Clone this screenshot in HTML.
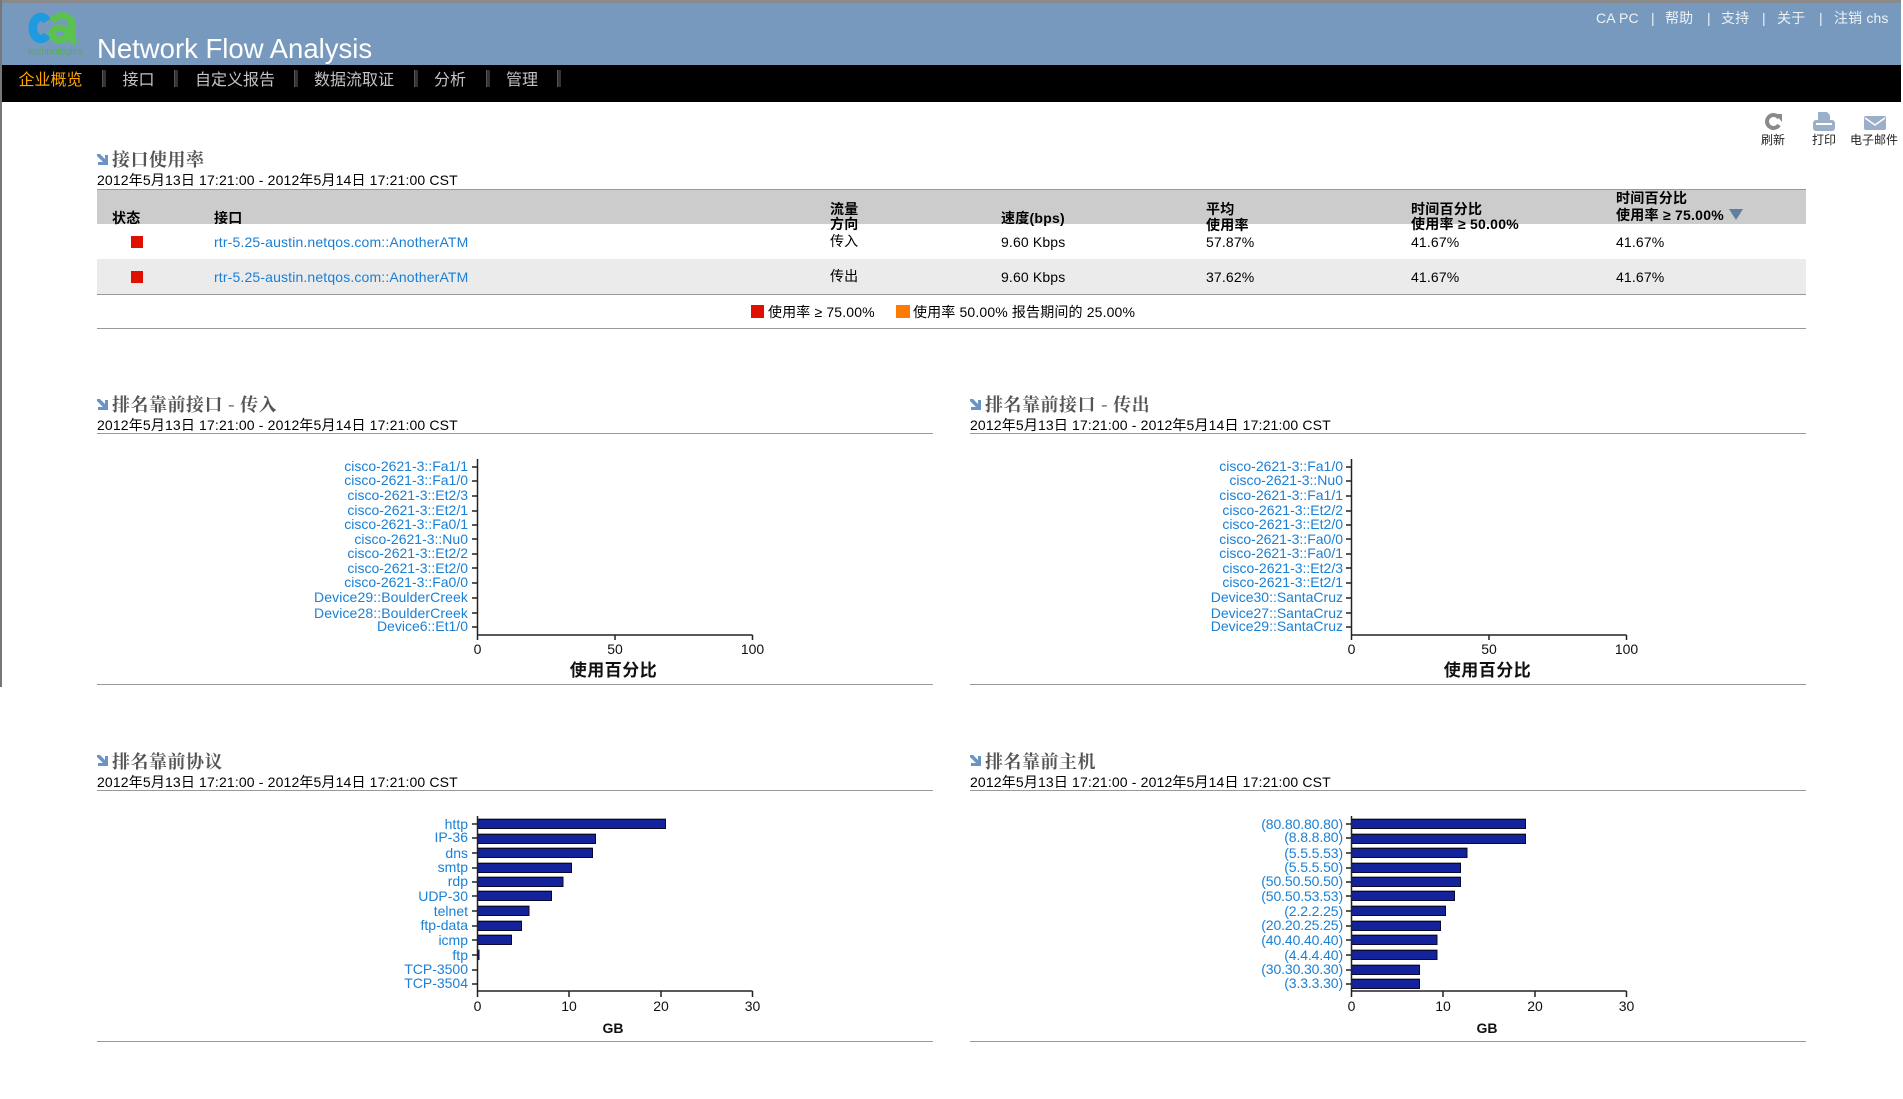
<!DOCTYPE html>
<html lang="zh"><head><meta charset="utf-8"><title>Network Flow Analysis</title>
<style>
html,body{margin:0;padding:0;background:#fff;width:1903px;height:1099px;overflow:hidden}
body{position:relative;font-family:"Liberation Sans","Noto Sans CJK SC",sans-serif;font-size:14px;color:#000}
.a{position:absolute;white-space:nowrap;line-height:16px;letter-spacing:.15px}
.b{position:absolute}
.n{font-size:16px;color:#c4c4c4;top:72px;line-height:18px;letter-spacing:0}
.s{position:absolute;top:70px;width:4px;height:17px;background:#333;border-left:1px solid #555;box-sizing:border-box}
.t{font-size:14px;color:#eef2f7;top:10px}
.h{font-family:"Noto Serif CJK SC",serif;font-size:18px;font-weight:700;color:#555;line-height:20px;letter-spacing:.5px}
.th{font-weight:700;letter-spacing:.25px}
.l{color:#1a7fd4}
.hr{position:absolute;height:1px;background:#999}
text{font-family:"Liberation Sans","Noto Sans CJK SC",sans-serif;font-size:14px}
.yl text{fill:#1a80d5;text-anchor:end}
.xl text{fill:#111;text-anchor:middle}
.bars{filter:drop-shadow(0 -1px 0 #aaa)}
</style></head><body>
<div class="b" style="left:0;top:0;width:1901px;height:3px;background:#8a8a8a"></div>
<div class="b" style="left:0;top:0;width:2px;height:687px;background:#777"></div>
<div class="b" style="left:2px;top:3px;width:1899px;height:62px;background:#7699bd"></div>
<div class="b" style="left:2px;top:65px;width:1899px;height:37px;background:#000"></div>
<svg class="b" style="left:20px;top:8px" width="70" height="50" viewBox="20 8 70 50">
<path d="M47 21 A8 11 0 1 0 47 35" fill="none" stroke="#1e9be0" stroke-width="8.500"/>
<ellipse cx="60" cy="34" rx="8" ry="6" fill="none" stroke="#5cc24f" stroke-width="7"/>
<path d="M52 21 Q60 13 67 17 Q72 19 72 26 L72 39 Q72 42 76 41" fill="none" stroke="#5cc24f" stroke-width="7"/>
<circle cx="79" cy="41" r="1" fill="#5cc24f"/>
<text x="28" y="54.500" style="font-size:9.800px;fill:#4fb34a">technologies</text>
</svg>
<div class="a" style="left:97px;top:33px;font-size:27.500px;line-height:32px;color:#fff;letter-spacing:0">Network Flow Analysis</div>
<div class="a n" style="left:18.500px;color:#ffa500">企业概览</div><div class="s" style="left:102px"></div>
<div class="a n" style="left:122.500px">接口</div><div class="s" style="left:174px"></div>
<div class="a n" style="left:195px">自定义报告</div><div class="s" style="left:294px"></div>
<div class="a n" style="left:314px">数据流取证</div><div class="s" style="left:414px"></div>
<div class="a n" style="left:434px">分析</div><div class="s" style="left:486px"></div>
<div class="a n" style="left:506px">管理</div><div class="s" style="left:557px"></div>
<div class="a t" style="left:1596px">CA PC</div><div class="a t" style="left:1651px">|</div>
<div class="a t" style="left:1665px">帮助</div><div class="a t" style="left:1707px">|</div>
<div class="a t" style="left:1721px">支持</div><div class="a t" style="left:1762px">|</div>
<div class="a t" style="left:1777px">关于</div><div class="a t" style="left:1819px">|</div>
<div class="a t" style="left:1834px">注销 chs</div>
<svg class="b" style="left:1760px;top:110px" width="140" height="24" viewBox="1760 110 140 24">
<path d="M1779 118 A6.500 6.500 0 1 0 1779 125" fill="none" stroke="#8a8a8a" stroke-width="4"/>
<path d="M1775 114 L1782 114 L1782 122 Z" fill="#8a8a8a"/>
<path d="M1818 112 L1827 112 L1830 115 L1830 123 L1818 123 Z" fill="#9bb0c8"/>
<rect x="1813" y="120" width="22" height="11" rx="3" fill="#9bb0c8"/><rect x="1816" y="123" width="16" height="2" fill="#fff"/>
<path d="M1866 116 L1884 116 Q1886 116 1886 118 L1886 128 Q1886 130 1884 130 L1866 130 Q1864 130 1864 128 L1864 118 Q1864 116 1866 116 Z" fill="#9bb0c8"/>
<path d="M1865 118 L1875 125 L1885 118" fill="none" stroke="#fff" stroke-width="1.500"/>
</svg>
<div class="a" style="left:1761px;top:132px;font-size:12px;color:#222;letter-spacing:0">刷新</div>
<div class="a" style="left:1812px;top:132px;font-size:12px;color:#222;letter-spacing:0">打印</div>
<div class="a" style="left:1850px;top:132px;font-size:12px;color:#222;letter-spacing:0">电子邮件</div>

<svg class="b" style="left:97px;top:154px" width="11" height="11" viewBox="0 0 11 11"><path d="M0 0 L3 0 L8 5 L8 1 L11 1 L11 11 L1 11 L1 8 L6 8 L0 2 Z" fill="#6a94c4"/></svg>
<div class="a h" style="left:112px;top:149px">接口使用率</div>
<div class="a" style="left:97px;top:172px">2012年5月13日 17:21:00 - 2012年5月14日 17:21:00 CST</div>

<div class="hr" style="left:97px;top:189px;width:1709px"></div>
<div class="b" style="left:97px;top:190px;width:1709px;height:34px;background:#ccc"></div>
<div class="b" style="left:97px;top:259px;width:1709px;height:35px;background:#ebebeb"></div>
<div class="hr" style="left:97px;top:294px;width:1709px"></div>
<div class="hr" style="left:97px;top:328px;width:1709px"></div>
<div class="a th" style="left:112px;top:210px">状态</div>
<div class="a th" style="left:214px;top:210px">接口</div>
<div class="a th" style="left:830px;top:201.500px;line-height:15.500px">流量<br>方向</div>
<div class="a th" style="left:1001px;top:210px">速度(bps)</div>
<div class="a th" style="left:1206px;top:201px">平均<br>使用率</div>
<div class="a th" style="left:1411px;top:201.500px;line-height:15.500px">时间百分比<br>使用率 ≥ 50.00%</div>
<div class="a th" style="left:1616px;top:190px;line-height:17px">时间百分比<br>使用率 ≥ 75.00%</div>
<svg class="b" style="left:1729px;top:209px" width="14" height="11"><path d="M0 0 L14 0 L7 11 Z" fill="#5f7f9f"/></svg>
<div class="b" style="left:131px;top:236px;width:12px;height:12px;background:#e01000"></div>
<div class="b" style="left:131px;top:271px;width:12px;height:12px;background:#e01000"></div>
<div class="a l" style="left:214px;top:234px">rtr-5.25-austin.netqos.com::AnotherATM</div>
<div class="a l" style="left:214px;top:269px">rtr-5.25-austin.netqos.com::AnotherATM</div>
<div class="a" style="left:830px;top:233px">传入</div><div class="a" style="left:830px;top:268px">传出</div>
<div class="a" style="left:1001px;top:234px">9.60 Kbps</div><div class="a" style="left:1001px;top:269px">9.60 Kbps</div>
<div class="a" style="left:1206px;top:234px">57.87%</div><div class="a" style="left:1206px;top:269px">37.62%</div>
<div class="a" style="left:1411px;top:234px">41.67%</div><div class="a" style="left:1411px;top:269px">41.67%</div>
<div class="a" style="left:1616px;top:234px">41.67%</div><div class="a" style="left:1616px;top:269px">41.67%</div>
<div class="b" style="left:751px;top:305px;width:13px;height:13px;background:#e01000"></div>
<div class="a" style="left:768px;top:304px">使用率 ≥ 75.00%</div>
<div class="b" style="left:896px;top:305px;width:14px;height:13px;background:#ff7a00"></div>
<div class="a" style="left:913px;top:304px">使用率 50.00% 报告期间的 25.00%</div>

<svg class="b" style="left:97px;top:399px" width="11" height="11" viewBox="0 0 11 11"><path d="M0 0 L3 0 L8 5 L8 1 L11 1 L11 11 L1 11 L1 8 L6 8 L0 2 Z" fill="#6a94c4"/></svg>
<div class="a h" style="left:112px;top:394px">排名靠前接口 - 传入</div>
<div class="a" style="left:97px;top:417px">2012年5月13日 17:21:00 - 2012年5月14日 17:21:00 CST</div>
<div class="hr" style="left:97px;top:433px;width:836px"></div>
<svg class="b" style="left:970px;top:399px" width="11" height="11" viewBox="0 0 11 11"><path d="M0 0 L3 0 L8 5 L8 1 L11 1 L11 11 L1 11 L1 8 L6 8 L0 2 Z" fill="#6a94c4"/></svg>
<div class="a h" style="left:985px;top:394px">排名靠前接口 - 传出</div>
<div class="a" style="left:970px;top:417px">2012年5月13日 17:21:00 - 2012年5月14日 17:21:00 CST</div>
<div class="hr" style="left:970px;top:433px;width:836px"></div>
<div class="hr" style="left:97px;top:684px;width:836px"></div>
<div class="hr" style="left:970px;top:684px;width:836px"></div>

<svg class="b" style="left:97px;top:755px" width="11" height="11" viewBox="0 0 11 11"><path d="M0 0 L3 0 L8 5 L8 1 L11 1 L11 11 L1 11 L1 8 L6 8 L0 2 Z" fill="#6a94c4"/></svg>
<div class="a h" style="left:112px;top:751px">排名靠前协议</div>
<div class="a" style="left:97px;top:774px">2012年5月13日 17:21:00 - 2012年5月14日 17:21:00 CST</div>
<div class="hr" style="left:97px;top:790px;width:836px"></div>
<svg class="b" style="left:970px;top:755px" width="11" height="11" viewBox="0 0 11 11"><path d="M0 0 L3 0 L8 5 L8 1 L11 1 L11 11 L1 11 L1 8 L6 8 L0 2 Z" fill="#6a94c4"/></svg>
<div class="a h" style="left:985px;top:751px">排名靠前主机</div>
<div class="a" style="left:970px;top:774px">2012年5月13日 17:21:00 - 2012年5月14日 17:21:00 CST</div>
<div class="hr" style="left:970px;top:790px;width:836px"></div>
<div class="hr" style="left:97px;top:1041px;width:836px"></div>
<div class="hr" style="left:970px;top:1041px;width:836px"></div>

<svg class="b" style="left:0;top:0" width="1903" height="1099" viewBox="0 0 1903 1099">
<g class="bars" fill="#14239b" stroke="#0a0a30" stroke-width="1">
<rect x="477.500" y="819.500" width="188" height="9"/><rect x="477.500" y="834.500" width="118" height="9"/><rect x="477.500" y="848.500" width="115" height="9"/><rect x="477.500" y="863.500" width="94" height="9"/><rect x="477.500" y="877.500" width="85.500" height="9"/><rect x="477.500" y="891.500" width="74" height="9"/><rect x="477.500" y="906.500" width="51.500" height="9"/><rect x="477.500" y="921.500" width="44" height="9"/><rect x="477.500" y="935.500" width="34" height="9"/><rect x="477.500" y="950.500" width="1.500" height="9"/>
<rect x="1351.500" y="819.500" width="174" height="9"/><rect x="1351.500" y="834.500" width="174" height="9"/><rect x="1351.500" y="848.500" width="115.500" height="9"/><rect x="1351.500" y="863.500" width="109" height="9"/><rect x="1351.500" y="877.500" width="109" height="9"/><rect x="1351.500" y="891.500" width="103" height="9"/><rect x="1351.500" y="906.500" width="94" height="9"/><rect x="1351.500" y="921.500" width="89" height="9"/><rect x="1351.500" y="935.500" width="85.500" height="9"/><rect x="1351.500" y="950.500" width="85.500" height="9"/><rect x="1351.500" y="965.500" width="68" height="9"/><rect x="1351.500" y="979.500" width="68" height="9"/>
</g>
<g fill="none" stroke="#222" stroke-width="1.500">
<path d="M477.500 459V635H752.500M477.500 635v5M615 635v5M752.500 635v5M472 467h5M472 481h5M472 496h5M472 511h5M472 525h5M472 539h5M472 554h5M472 568h5M472 583h5M472 598h5M472 613h5M472 627h5"/>
<path d="M1351.500 459V635H1626.500M1351.500 635v5M1489 635v5M1626.500 635v5M1346 467h5M1346 481h5M1346 496h5M1346 511h5M1346 525h5M1346 539h5M1346 554h5M1346 568h5M1346 583h5M1346 598h5M1346 613h5M1346 627h5"/>
<path d="M477.500 816V991H752.500M477.500 991v6M569 991v6M661 991v6M752.500 991v6M472 824h5M472 838h5M472 853h5M472 868h5M472 882h5M472 896h5M472 911h5M472 926h5M472 940h5M472 955h5M472 970h5M472 984h5"/>
<path d="M1351.500 816V991H1626.500M1351.500 991v6M1443 991v6M1535 991v6M1626.500 991v6M1346 824h5M1346 838h5M1346 853h5M1346 868h5M1346 882h5M1346 896h5M1346 911h5M1346 926h5M1346 940h5M1346 955h5M1346 970h5M1346 984h5"/>
</g>
<g class="yl">
<text x="468" y="471">cisco-2621-3::Fa1/1</text><text x="468" y="485">cisco-2621-3::Fa1/0</text><text x="468" y="500">cisco-2621-3::Et2/3</text><text x="468" y="515">cisco-2621-3::Et2/1</text><text x="468" y="529">cisco-2621-3::Fa0/1</text><text x="468" y="544">cisco-2621-3::Nu0</text><text x="468" y="558">cisco-2621-3::Et2/2</text><text x="468" y="573">cisco-2621-3::Et2/0</text><text x="468" y="587">cisco-2621-3::Fa0/0</text><text x="468" y="602" style="letter-spacing:.1px">Device29::BoulderCreek</text><text x="468" y="618" style="letter-spacing:.1px">Device28::BoulderCreek</text><text x="468" y="631">Device6::Et1/0</text>
<text x="1343" y="471">cisco-2621-3::Fa1/0</text><text x="1343" y="485">cisco-2621-3::Nu0</text><text x="1343" y="500">cisco-2621-3::Fa1/1</text><text x="1343" y="515">cisco-2621-3::Et2/2</text><text x="1343" y="529">cisco-2621-3::Et2/0</text><text x="1343" y="544">cisco-2621-3::Fa0/0</text><text x="1343" y="558">cisco-2621-3::Fa0/1</text><text x="1343" y="573">cisco-2621-3::Et2/3</text><text x="1343" y="587">cisco-2621-3::Et2/1</text><text x="1343" y="602">Device30::SantaCruz</text><text x="1343" y="618">Device27::SantaCruz</text><text x="1343" y="631">Device29::SantaCruz</text>
<text x="468" y="829">http</text><text x="468" y="842">IP-36</text><text x="468" y="858">dns</text><text x="468" y="872">smtp</text><text x="468" y="886">rdp</text><text x="468" y="901">UDP-30</text><text x="468" y="916">telnet</text><text x="468" y="930">ftp-data</text><text x="468" y="945">icmp</text><text x="468" y="960">ftp</text><text x="468" y="974">TCP-3500</text><text x="468" y="988">TCP-3504</text>
</g>
<g class="yl" style="letter-spacing:-.12px">
<text x="1343" y="829">(80.80.80.80)</text><text x="1343" y="842">(8.8.8.80)</text><text x="1343" y="858">(5.5.5.53)</text><text x="1343" y="872">(5.5.5.50)</text><text x="1343" y="886">(50.50.50.50)</text><text x="1343" y="901">(50.50.53.53)</text><text x="1343" y="916">(2.2.2.25)</text><text x="1343" y="930">(20.20.25.25)</text><text x="1343" y="945">(40.40.40.40)</text><text x="1343" y="960">(4.4.4.40)</text><text x="1343" y="974">(30.30.30.30)</text><text x="1343" y="988">(3.3.3.30)</text>
</g>
<g class="xl">
<text x="477.500" y="654">0</text><text x="615" y="654">50</text><text x="752.500" y="654">100</text>
<text x="1351.500" y="654">0</text><text x="1489" y="654">50</text><text x="1626.500" y="654">100</text>
<text x="477.500" y="1011">0</text><text x="569" y="1011">10</text><text x="661" y="1011">20</text><text x="752.500" y="1011">30</text>
<text x="1351.500" y="1011">0</text><text x="1443" y="1011">10</text><text x="1535" y="1011">20</text><text x="1626.500" y="1011">30</text>
<text x="613.500" y="676" style="font-size:17px;font-weight:700;letter-spacing:.5px">使用百分比</text><text x="1487.500" y="676" style="font-size:17px;font-weight:700;letter-spacing:.5px">使用百分比</text>
<text x="613" y="1033" style="font-size:14px;font-weight:700">GB</text><text x="1487" y="1033" style="font-size:14px;font-weight:700">GB</text>
</g>
</svg>
</body></html>
